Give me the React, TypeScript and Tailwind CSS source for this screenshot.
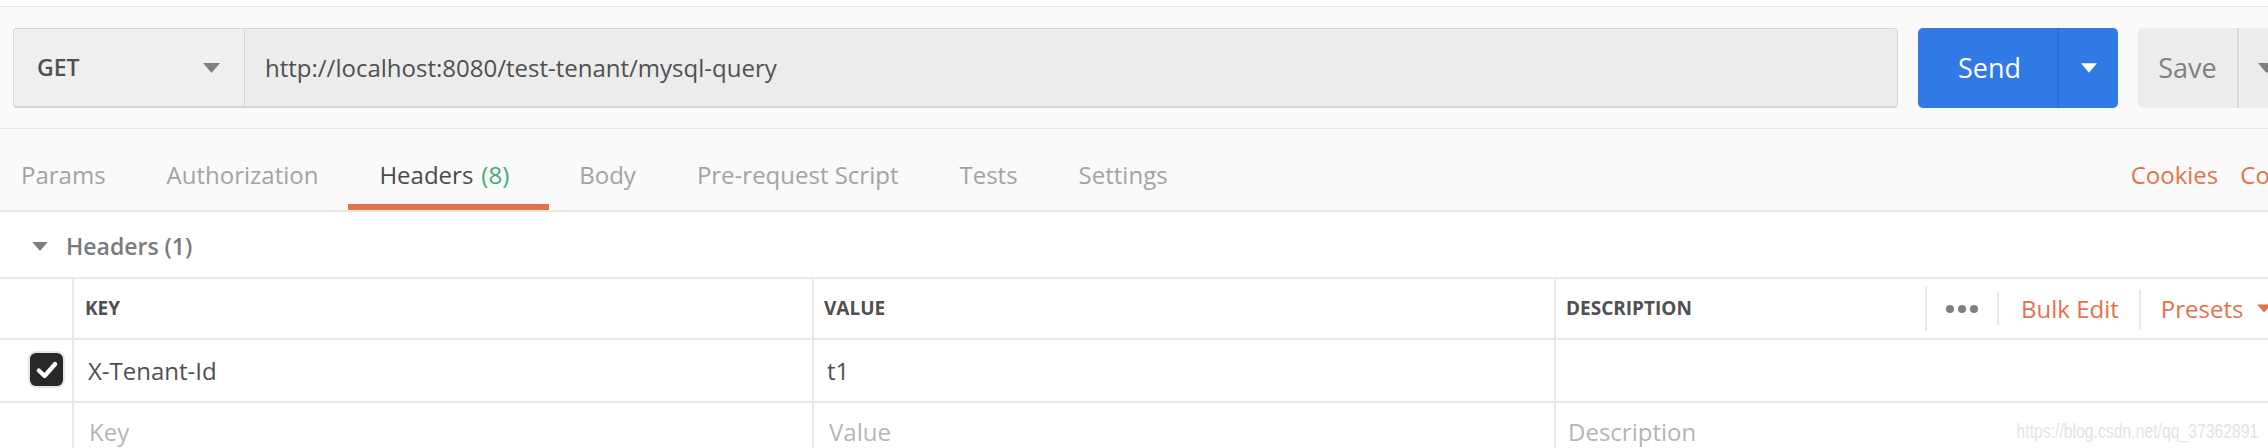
import React from "react";

const Caret = ({ color, w = 17, h = 10 }: { color: string; w?: number; h?: number }) => (
  <svg width={w} height={h} viewBox="0 0 17 10" className="block">
    <polygon points="0,0 17,0 8.5,10" fill={color} />
  </svg>
);

export default function App() {
  const tabs = ["Params", "Authorization", "Headers", "Body", "Pre-request Script", "Tests", "Settings"];
  return (
    <div className="w-[2268px] h-[448px] overflow-hidden bg-white font-['Open_Sans',sans-serif] text-[#505050]">
      {/* top strip */}
      <div className="h-[6px] bg-white" />
      <div className="h-[1px] bg-[#e6e6e6]" />

      {/* request bar */}
      <div className="bg-[#fafafa] pt-[21px] pb-[20px] pl-[13px] flex items-stretch h-[121px] w-[2400px]">
        <div className="flex h-[80px] w-[1885px] rounded-[4px] border border-[#d6d6d6] border-b-2 bg-[#ececec]">
          <div className="w-[231px] flex items-center justify-between pl-[23px] pr-[24px] bg-[#efefef] rounded-l-[4px] border-r border-[#d6d6d6]">
            <span className="text-[23px] font-semibold text-[#505050]">GET</span>
            <Caret color="#808080" />
          </div>
          <div className="flex-1 flex items-center pl-[20px] text-[24px] text-[#505050]">
            http://localhost:8080/test-tenant/mysql-query
          </div>
        </div>
        <div className="ml-[20px] flex h-[80px] w-[200px] rounded-[5px] bg-[#3179e5] overflow-hidden">
          <div className="w-[139px] flex items-center justify-center text-white text-[27px] pl-[4px]">Send</div>
          <div className="w-[2px] bg-[#2b6dd4]" />
          <div className="flex-1 flex items-center justify-center">
            <Caret color="#ffffff" w={16} h={10} />
          </div>
        </div>
        <div className="ml-[20px] flex h-[80px] w-[170px] rounded-l-[5px] bg-[#ececec]">
          <div className="w-[99px] flex items-center justify-center text-[27px] text-[#808080]">Save</div>
          <div className="w-[2px] bg-[#d9d9d9]" />
          <div className="flex-1 flex items-center pl-[19px]">
            <Caret color="#808080" />
          </div>
        </div>
      </div>
      <div className="h-[1px] bg-[#e6e6e6]" />

      {/* tabs */}
      <div className="bg-[#fafafa] h-[81px] flex items-stretch pl-[21px] w-[2298px] text-[24px]">
        <div className="flex items-stretch gap-[61px]">
          {tabs.map((t) =>
            t === "Headers" ? (
              <div key={t} className="relative flex items-center mr-[9px] pt-[10px]">
                <span className="text-[#4a4a4a]">Headers</span>
                <span className="ml-[8px] text-[#45ab7a]">(8)</span>
                <div className="absolute bottom-0 left-[-31px] right-[-40px] h-[6px] bg-[#e5714a]" />
              </div>
            ) : (
              <div key={t} className="flex items-center pt-[10px] text-[#a3a3a3]">
                {t}
              </div>
            )
          )}
        </div>
        <div className="ml-auto flex items-center gap-[22px] pt-[10px] text-[#e5714a]">
          <span>Cookies</span>
          <span>Code</span>
        </div>
      </div>
      <div className="h-[2px] bg-[#e8e8e8]" />

      {/* Headers (1) */}
      <div className="h-[65px] flex items-center pl-[32px] pt-[4px]">
        <Caret color="#7f7f7f" w={16} h={9} />
        <span className="ml-[18px] text-[23px] font-semibold text-[#7b7b7b]">Headers (1)</span>
      </div>
      <div className="h-[2px] bg-[#e8e8e8]" />

      {/* table header */}
      <div className="flex h-[59px]">
        <div className="w-[74px] border-r-2 border-[#e8e8e8]" />
        <div className="w-[740px] border-r-2 border-[#e8e8e8] flex items-center pl-[11px] text-[19px] font-bold text-[#505050]">KEY</div>
        <div className="w-[742px] border-r-2 border-[#e8e8e8] flex items-center pl-[10px] text-[19px] font-bold text-[#505050]">VALUE</div>
        <div className="flex-1 flex items-center min-w-0">
          <div className="w-[369px] shrink-0 pl-[10px] text-[19px] font-bold text-[#505050]">DESCRIPTION</div>
          <div className="w-[2px] h-[44px] shrink-0 bg-[#e8e8e8]" />
          <div className="ml-[19px] flex items-center gap-[4px] shrink-0">
            <span className="w-[8px] h-[8px] rounded-full bg-[#808080]" />
            <span className="w-[8px] h-[8px] rounded-full bg-[#808080]" />
            <span className="w-[8px] h-[8px] rounded-full bg-[#808080]" />
          </div>
          <div className="ml-[19px] w-[2px] h-[33px] shrink-0 bg-[#e8e8e8]" />
          <span className="ml-[22px] text-[24px] text-[#e5714a] whitespace-nowrap shrink-0">Bulk Edit</span>
          <div className="ml-[20px] w-[2px] h-[40px] shrink-0 bg-[#e8e8e8]" />
          <span className="ml-[20px] text-[24px] text-[#e5714a] whitespace-nowrap shrink-0">Presets</span>
          <div className="ml-[14px] shrink-0">
            <Caret color="#e5714a" w={14} h={9} />
          </div>
        </div>
      </div>
      <div className="h-[2px] bg-[#e8e8e8]" />

      {/* row 1 */}
      <div className="flex h-[61px]">
        <div className="w-[74px] border-r-2 border-[#e8e8e8] flex items-center justify-end pr-[9px] pb-[2px]">
          <div className="w-[33px] h-[33px] rounded-[6px] bg-[#282828] ring-2 ring-[#e6e6e6] flex items-center justify-center">
            <svg width="26" height="26" viewBox="0 0 24 24">
              <path d="M4.5 12.5 L9.8 17.5 L19.5 6.5" fill="none" stroke="#ffffff" strokeWidth="4" strokeLinecap="round" strokeLinejoin="round" />
            </svg>
          </div>
        </div>
        <div className="w-[740px] border-r-2 border-[#e8e8e8] flex items-center pl-[14px] text-[24px] text-[#505050]">X-Tenant-Id</div>
        <div className="w-[742px] border-r-2 border-[#e8e8e8] flex items-center pl-[13px] text-[24px] text-[#505050]">t1</div>
        <div className="flex-1" />
      </div>
      <div className="h-[2px] bg-[#e8e8e8]" />

      {/* row 2 */}
      <div className="relative flex h-[61px]">
        <div className="w-[74px] border-r-2 border-[#e8e8e8]" />
        <div className="w-[740px] border-r-2 border-[#e8e8e8] flex items-center pl-[15px] pb-[4px] text-[24px] text-[#b5b5b5]">Key</div>
        <div className="w-[742px] border-r-2 border-[#e8e8e8] flex items-center pl-[15px] pb-[4px] text-[24px] text-[#b5b5b5]">Value</div>
        <div className="flex-1 flex items-center pl-[12px] pb-[4px] text-[24px] text-[#b5b5b5]">Description</div>
        <div className="absolute right-[10px] top-[12px] origin-right scale-x-75 font-['Liberation_Sans',Arial,sans-serif] text-[21px] text-[#e3e3e3] whitespace-nowrap">
          https://blog.csdn.net/qq_37362891
        </div>
      </div>
    </div>
  );
}
